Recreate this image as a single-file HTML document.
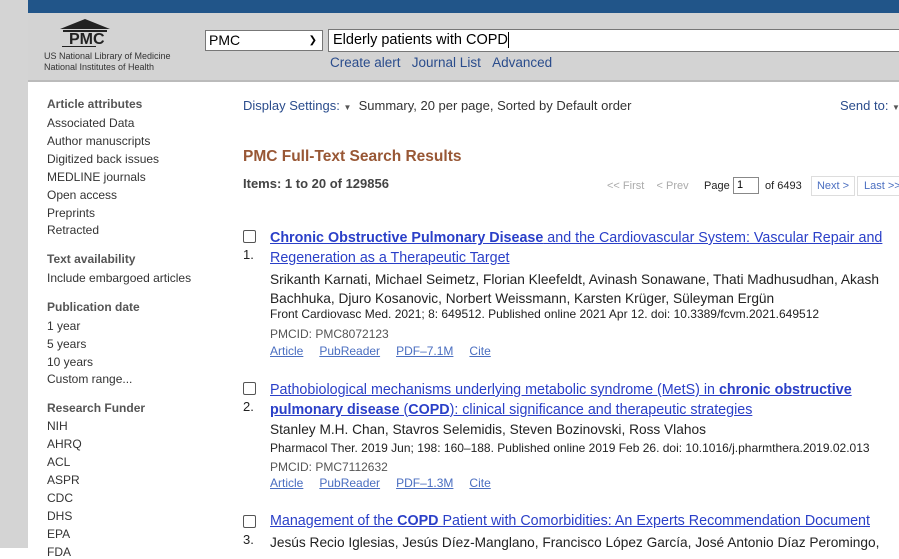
<!DOCTYPE html>
<html><head><style>
body{margin:0;width:899px;height:548px;overflow:hidden;font-family:"Liberation Sans",sans-serif;background:#fff;position:relative}
.a{position:absolute;white-space:nowrap}
.side div{position:absolute;left:47px;font-size:12px;color:#333}
.side .h{font-weight:bold;color:#555}
a{color:#2a3fc8;text-decoration:underline}
.t{font-size:14.3px;color:#2a3fc8}
.au{font-size:13.7px;color:#222}
.j{font-size:12px;color:#222}
.p{font-size:12px;color:#555}
.l{font-size:12px}
.l a{color:#4a6ec0;margin-right:16px}
.cb{position:absolute;left:243px;width:11px;height:11px;border:1px solid #555;border-radius:2px;background:#fff}
.n{font-size:13px;color:#222}
</style></head><body>
<div class="a" style="left:0;top:0;width:28px;height:548px;background:#d4d4d4"></div>
<div class="a" style="left:28px;top:0;width:871px;height:13px;background:#215589"></div>
<div class="a" style="left:28px;top:13px;width:871px;height:67px;background:#d3d3d3;border-bottom:2px solid #bbb"></div>
<svg class="a" style="left:60px;top:19px" width="50" height="14"><polygon points="25,0 50,10 0,10" fill="#222"/><rect x="3" y="11" width="44" height="2" fill="#222"/></svg>
<div class="a" style="left:69px;top:31px;font-size:16px;font-weight:bold;color:#222">PMC</div>
<div class="a" style="left:62px;top:46px;width:34px;height:1px;background:#222"></div>
<div class="a" style="left:44px;top:51px;font-size:9px;color:#333;line-height:11px">US National Library of Medicine<br>National Institutes of Health</div>
<div class="a" style="left:205px;top:30px;background:#fff;border:1px solid #777;font-size:14px;line-height:19px;padding-left:3px;box-sizing:border-box;width:118px;height:21px">PMC<span style="position:absolute;right:5px;font-size:10px">&#10095;</span></div>
<div class="a" style="left:328px;top:29px;width:580px;height:23px;background:#fff;border:1px solid #777;box-sizing:border-box;font-size:14.5px;line-height:21px;padding-left:4px">Elderly patients with COPD <span style="border-left:1px solid #000"></span></div>
<div class="a" style="left:330px;top:55px;font-size:13.5px;color:#2a4c8c">Create alert&nbsp;&nbsp;&nbsp;Journal List&nbsp;&nbsp;&nbsp;Advanced</div>
<div class="side">
<div class="h" style="top:97px">Article attributes</div>
<div style="top:116px">Associated Data</div><div style="top:134px">Author manuscripts</div><div style="top:152px">Digitized back issues</div><div style="top:170px">MEDLINE journals</div><div style="top:188px">Open access</div><div style="top:206px">Preprints</div><div style="top:223px">Retracted</div>
<div class="h" style="top:252px">Text availability</div><div style="top:271px">Include embargoed articles</div>
<div class="h" style="top:300px">Publication date</div><div style="top:319px">1 year</div><div style="top:337px">5 years</div><div style="top:355px">10 years</div><div style="top:372px">Custom range...</div>
<div class="h" style="top:401px">Research Funder</div><div style="top:419px">NIH</div><div style="top:437px">AHRQ</div><div style="top:455px">ACL</div><div style="top:473px">ASPR</div><div style="top:491px">CDC</div><div style="top:509px">DHS</div><div style="top:527px">EPA</div><div style="top:545px">FDA</div>
</div>
<div class="a" style="left:243px;top:98px;font-size:13px;color:#2a4c8c">Display Settings: <span style="font-size:8px;color:#555">▼</span>&nbsp; <span style="color:#333">Summary, 20 per page, Sorted by Default order</span></div>
<div class="a" style="left:840px;top:98px;font-size:13px;color:#2a4c8c">Send to: <span style="font-size:8px;color:#555">▼</span></div>
<div class="a" style="left:243px;top:148px;font-size:15.5px;font-weight:bold;color:#985735">PMC Full-Text Search Results</div>
<div class="a" style="left:243px;top:176px;font-size:13px;font-weight:bold;color:#444">Items: 1 to 20 of 129856</div>
<div class="a" style="left:607px;top:180px;font-size:11px;color:#aaa">&lt;&lt; First&nbsp;&nbsp;&nbsp; &lt; Prev</div>
<div class="a" style="left:704px;top:180px;font-size:11px;color:#222">Page</div>
<div class="a" style="left:733px;top:177px;width:26px;height:17px;border:1px solid #888;box-sizing:border-box;font-size:11px;padding-left:3px;line-height:15px">1</div>
<div class="a" style="left:765px;top:180px;font-size:11px;color:#222">of 6493</div>
<div class="a" style="left:811px;top:176px;width:42px;height:18px;border:1px solid #ddd;font-size:11px;color:#4a6ec0;line-height:18px;text-align:center">Next &gt;</div>
<div class="a" style="left:857px;top:176px;width:50px;height:18px;border:1px solid #ddd;font-size:11px;color:#4a6ec0;line-height:18px;padding-left:6px">Last &gt;&gt;</div>

<div class="cb" style="top:230px"></div><div class="a n" style="left:243px;top:247px">1.</div>
<div class="a t" style="left:270px;top:228px;line-height:20px"><a><b>Chronic Obstructive Pulmonary Disease</b> and the Cardiovascular System: Vascular Repair and</a><br><a>Regeneration as a Therapeutic Target</a></div>
<div class="a au" style="left:270px;top:270px;line-height:19px">Srikanth Karnati, Michael Seimetz, Florian Kleefeldt, Avinash Sonawane, Thati Madhusudhan, Akash<br>Bachhuka, Djuro Kosanovic, Norbert Weissmann, Karsten Krüger, Süleyman Ergün</div>
<div class="a j" style="left:270px;top:307px">Front Cardiovasc Med. 2021; 8: 649512. Published online 2021 Apr 12. doi: 10.3389/fcvm.2021.649512</div>
<div class="a p" style="left:270px;top:327px">PMCID: PMC8072123</div>
<div class="a l" style="left:270px;top:344px"><a>Article</a><a>PubReader</a><a>PDF–7.1M</a><a>Cite</a></div>

<div class="cb" style="top:382px"></div><div class="a n" style="left:243px;top:399px">2.</div>
<div class="a t" style="left:270px;top:380px;line-height:20px"><a>Pathobiological mechanisms underlying metabolic syndrome (MetS) in <b>chronic obstructive</b></a><br><a><b>pulmonary disease</b> (<b>COPD</b>): clinical significance and therapeutic strategies</a></div>
<div class="a au" style="left:270px;top:422px">Stanley M.H. Chan, Stavros Selemidis, Steven Bozinovski, Ross Vlahos</div>
<div class="a j" style="left:270px;top:441px">Pharmacol Ther. 2019 Jun; 198: 160–188. Published online 2019 Feb 26. doi: 10.1016/j.pharmthera.2019.02.013</div>
<div class="a p" style="left:270px;top:460px">PMCID: PMC7112632</div>
<div class="a l" style="left:270px;top:476px"><a>Article</a><a>PubReader</a><a>PDF–1.3M</a><a>Cite</a></div>

<div class="cb" style="top:515px"></div><div class="a n" style="left:243px;top:532px">3.</div>
<div class="a t" style="left:270px;top:513px"><a>Management of the <b>COPD</b> Patient with Comorbidities: An Experts Recommendation Document</a></div>
<div class="a au" style="left:270px;top:535px">Jesús Recio Iglesias, Jesús Díez-Manglano, Francisco López García, José Antonio Díaz Peromingo,</div>
</body></html>
